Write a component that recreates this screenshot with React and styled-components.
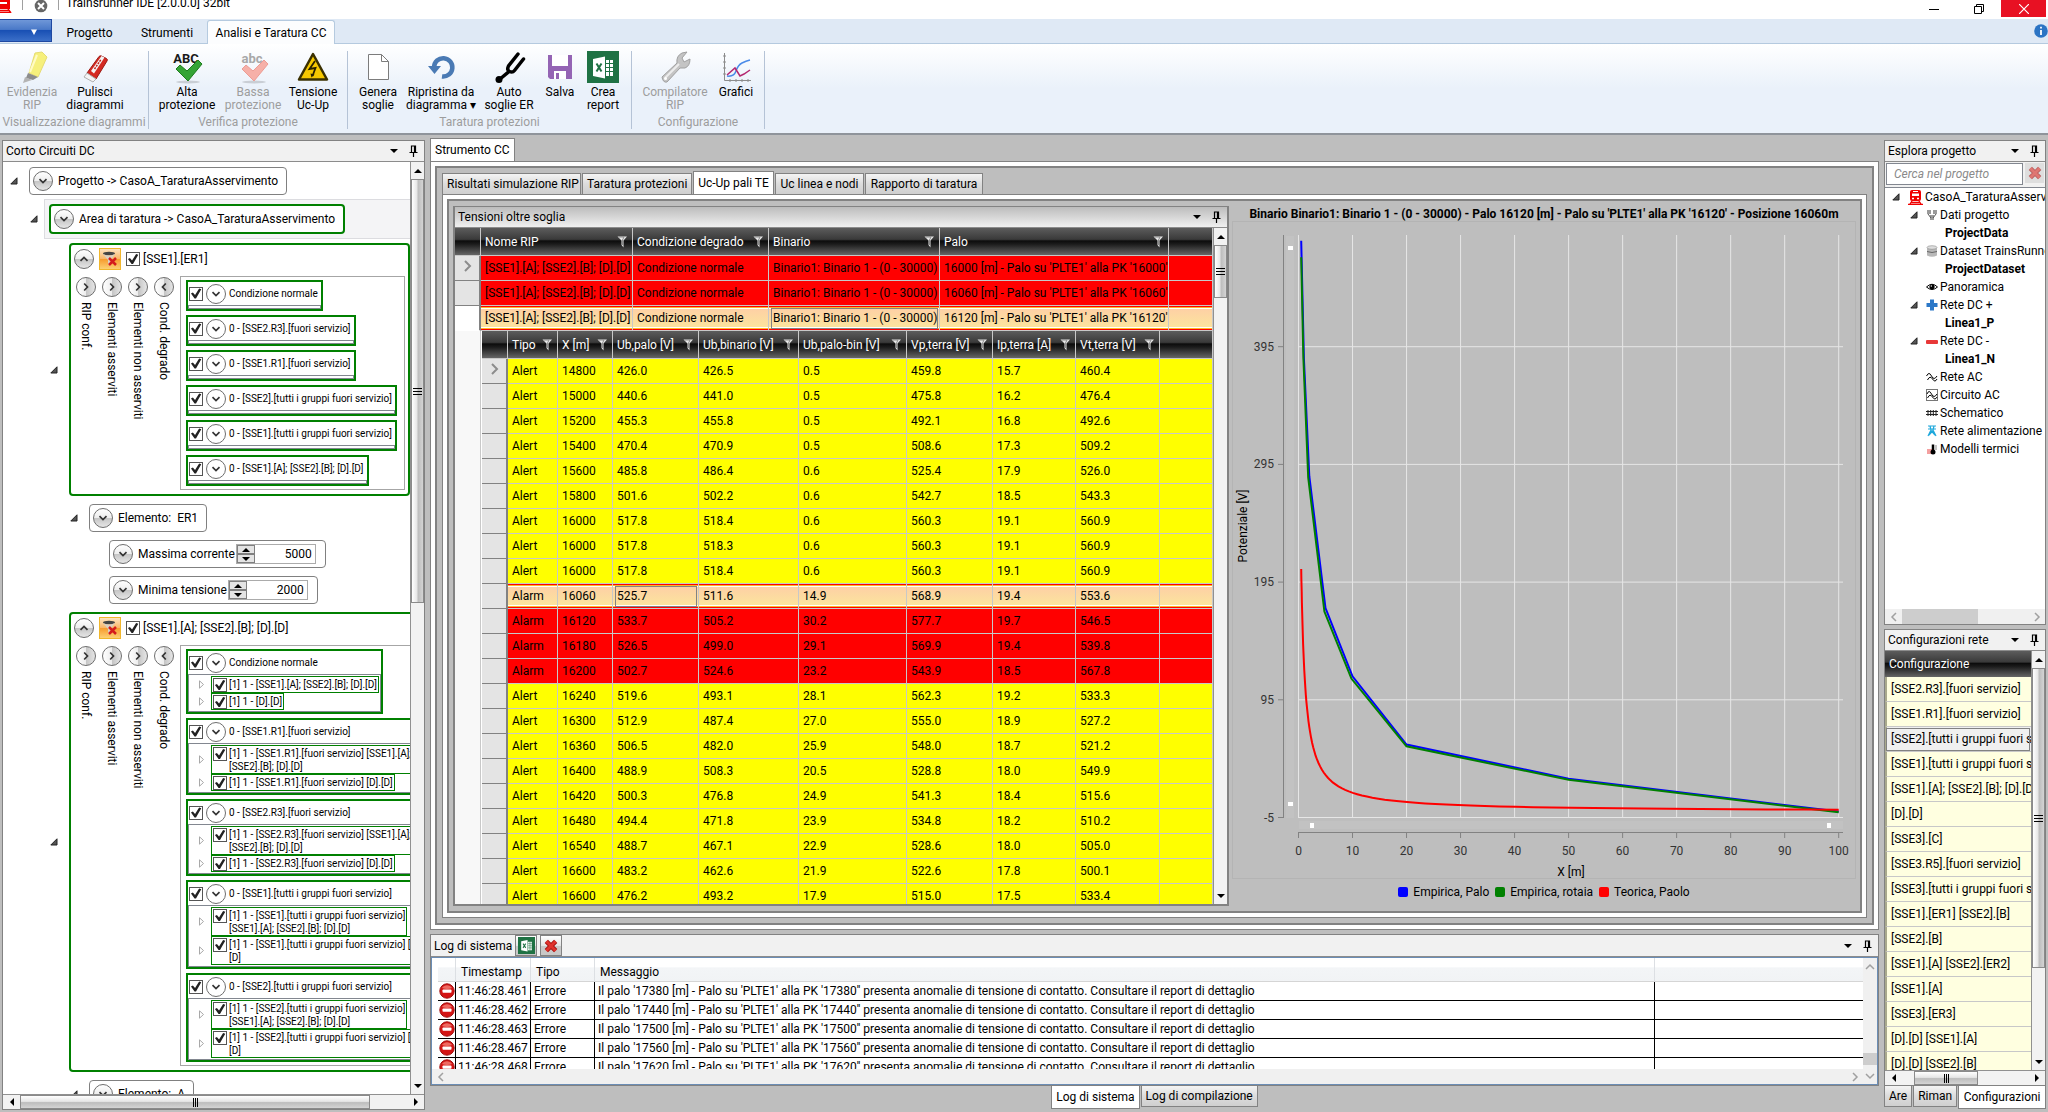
import React from 'react';
import styled, { createGlobalStyle, css } from 'styled-components';

const GlobalStyle = createGlobalStyle`
    * {
        box-sizing: border-box;
    }
    body {
        margin: 0;
        font-family: Roboto, "Open Sans", sans-serif;
        font-size: 12px;
        line-height: 16px;
        color: #000;
        background: #bebebe;
    }
    button, input {
        font: inherit;
        color: inherit;
        margin: 0;
    }
    button {
        border: none;
        background: none;
        padding: 0;
    }
    h1, h2, p {
        margin: 0;
        font-size: 12px;
        font-weight: 400;
    }
`

const App = styled.div`
    height: 100vh;
    display: flex;
    flex-direction: column;
    overflow: hidden;
    white-space: nowrap;
`

/* title bar */
const TitleBar = styled.header`
    height: 19px;
    flex: none;
    display: flex;
    align-items: flex-start;
    background: #fff;
    overflow: hidden;
    svg {
        flex: none;
    }
`
const TitleIcons = styled.div`
    display: flex;
    width: 66px;
    height: 13px;
    justify-content: space-between;
    padding-right: 7px;
`
const TitleRule = styled.span`
    width: 1px;
    height: 10px;
    background: #a0a0a0;
`
const Title = styled.h1`
    flex: 1;
    line-height: 7px;
`
const WindowButton = styled.button`
    width: 45px;
    height: 17px;
    display: flex;
    align-items: center;
    justify-content: center;
    background: ${props => props.$close ? "#e81123" : "transparent"};
    margin-right: ${props => props.$close ? "2px" : "0"};
`

/* ribbon */
const RibbonTabs = styled.nav`
    height: 25px;
    flex: none;
    display: flex;
    align-items: flex-end;
    background: #dfe9f5;
    border-bottom: 1px solid #b5cadf;
`
const FileButton = styled.button`
    width: 52px;
    height: 23px;
    align-self: flex-start;
    padding-left: 16px;
    color: #fff;
    border: 1px solid #1f48a1;
    border-left: none;
    background: linear-gradient(#6f97d8, #4a79c8 45%, #1950b4 50%, #3b6fc8);
`
const RibbonTab = styled.button`
    height: 24px;
    width: ${props => props.$width};
    margin-bottom: -1px;
    border: 1px solid ${props => props.$active ? "#b5cadf" : "transparent"};
    border-bottom: none;
    border-radius: 3px 3px 0 0;
    background: ${props => props.$active ? "#fcfdfe" : "transparent"};
`
const Spacer = styled.span`
    flex: 1;
`
const Info = styled.span`
    width: 14px;
    height: 24px;
    display: flex;
    align-items: center;
`
const Ribbon = styled.div`
    height: 91px;
    flex: none;
    display: flex;
    padding: 7px 0 4px;
    background: linear-gradient(#fff, #eaf1fa 50%, #eaf1fa);
    border-bottom: 2px solid #8f949b;
`
const RibbonGroup = styled.section`
    width: ${props => props.$width};
    padding-left: ${props => props.$pad};
    border-right: 1px solid #b5c3d6;
    display: flex;
    flex-direction: column;
`
const RibbonRow = styled.div`
    display: flex;
    flex: 1;
`
const RibbonButton = styled.button`
    width: ${props => props.$width};
    display: flex;
    flex-direction: column;
    align-items: center;
    line-height: 13px;
    color: ${props => props.disabled ? "#9d9d9d" : "#000"};
    svg {
        width: 32px;
        height: 32px;
        margin-bottom: 3px;
        overflow: visible;
    }
`
const RibbonCaption = styled.p`
    line-height: 13px;
    text-align: center;
    color: #9d9d9d;
    margin-left: -${props => props.$pad};
`

/* docking area */
const Workspace = styled.div`
    flex: 1;
    min-height: 0;
    display: flex;
    gap: 5px;
    padding: 5px 2px 2px;
`
const LeftDock = styled.aside`
    width: 423px;
    flex: none;
    display: flex;
`
const CenterDock = styled.main`
    flex: 1;
    min-width: 0;
    display: flex;
    flex-direction: column;
`
const RightDock = styled.aside`
    width: 162px;
    flex: none;
    display: flex;
    flex-direction: column;
    gap: 4px;
`
const LowerDock = styled.div`
    flex: 483 0 0;
    min-height: 0;
    display: flex;
    flex-direction: column;
`
const Panel = styled.section`
    flex: ${props => props.$flex || 1};
    min-width: 0;
    min-height: 0;
    display: flex;
    flex-direction: column;
    background: #fff;
    border: 1px solid #828282;
    overflow: hidden;
`
const PanelHeader = styled.header`
    height: ${props => props.$tall ? "22px" : "21px"};
    flex: none;
    display: flex;
    align-items: center;
    padding: 0 6px 0 3px;
    background: #f1f1f1;
    border-bottom: 1px solid #8c8c8c;
    gap: 3px;
`
const PanelTools = styled.div`
    margin-left: auto;
    display: flex;
    align-items: center;
    gap: 10px;
    button {
        display: flex;
    }
`
const PanelBody = styled.div`
    flex: 1;
    min-height: 0;
    display: flex;
`
const Tabs = styled.div`
    display: flex;
    flex: none;
    align-items: ${props => props.$below ? "flex-start" : "flex-end"};
    justify-content: ${props => props.$center ? "center" : "flex-start"};
    height: ${props => props.$height || "23px"};
    gap: 1px;
`
const Tab = styled.button`
    height: ${props => props.$active ? "23px" : "21px"};
    padding: 0 4px;
    width: ${props => props.$width || "auto"};
    flex: ${props => props.$grow ? 1 : "none"};
    overflow: hidden;
    border: 1px solid #828282;
    ${props => props.$below ? "border-top: none;" : "border-bottom: none;"}
    background: ${props => props.$active ? "#fff" : "linear-gradient(#f4f4f4, #dcdcdc 50%, #cfcfcf)"};
`
const Frame = styled.div`
    flex: 1;
    min-height: 0;
    display: flex;
    border: 1px solid #828282;
    padding: 4px;
    background: #fff;
`
const FrameInner = styled.div`
    flex: 1;
    min-width: 0;
    display: flex;
    flex-direction: ${props => props.$column ? "column" : "row"};
    border: 2px solid #828282;
    padding: ${props => props.$column ? "3px 5px 5px" : "5px 5px 5px 4px"};
    background: #bebebe;
`

/* scroll bars */
const ScrollTrack = styled.div`
    flex: none;
    display: flex;
    ${props => props.$horizontal
        ? css`height: 15px; flex-direction: row;`
        : css`width: 14px; flex-direction: column;`}
    background: ${props => props.$flat ? "#f0f0f0" : "#f2f2f2"};
    ${props => !props.$flat && css`border: 0 solid #909090; ${props.$horizontal ? "border-top-width: 1px;" : "border-left-width: 1px;"}`}
`
const ScrollButton = styled.button`
    flex: none;
    width: ${props => props.$horizontal ? "17px" : "100%"};
    height: ${props => props.$horizontal ? "100%" : "17px"};
    display: flex;
    align-items: center;
    justify-content: center;
`
const ScrollRun = styled.div`
    flex: ${props => props.$grow} 0 0;
`
const ScrollThumb = styled.div`
    flex: ${props => props.$grow} 0 0;
    display: flex;
    align-items: center;
    justify-content: center;
    ${props => props.$flat ? css`background: #cdcdcd;` : css`
        border: 1px solid #8a8a8a;
        background: linear-gradient(${props.$horizontal ? "180deg" : "90deg"}, #fff, #e6e6e6 45%, #bdbdbd 55%, #d4d4d4);
    `}
`

/* short circuit tree */
const TreeArea = styled.div`
    flex: 1;
    min-height: 0;
    min-width: 0;
    overflow: hidden;
    display: flex;
    flex-direction: column;
    gap: 8px;
    padding-top: 5px;
`
const TreeRow = styled.div`
    flex: none;
    display: flex;
    align-items: center;
    gap: 11px;
    padding-left: ${props => 7 + props.$level * 20}px;
`
const ArrowSlot = styled.span`
    width: 8px;
    flex: none;
    display: flex;
`
const Highlight = styled.div`
    flex: 1;
    margin: -4px 0 -4px -5px;
    padding: 4px;
    border: 1px solid #dcdce0;
    border-right: none;
    background: #f4f4f6;
`
const NodeBox = styled.div`
    display: flex;
    width: fit-content;
    align-items: center;
    gap: 5px;
    padding: 3px 8px 3px 3px;
    background: #fff;
    border: ${props => props.$green ? "2px solid #008000" : "1px solid #808080"};
    border-radius: 4px;
`
const RoundButton = styled.button`
    width: 20px;
    height: 20px;
    flex: none;
    display: flex;
    align-items: center;
    justify-content: center;
    border: 1px solid #6e6e6e;
    border-radius: 50%;
    background: ${props => props.$plain ? "#fff" : `linear-gradient(${props.$side ? "90deg" : "180deg"}, #fff, #ededed 50%, #c4c4c4 50%, #e6e6e6)`};
`
const Check = styled.input`
    appearance: none;
    width: 14px;
    height: 14px;
    flex: none;
    border: 1px solid #555;
    background: #fff;
    &:checked::before {
        content: "";
        display: block;
        width: 12px;
        height: 12px;
        background: #222;
        clip-path: polygon(8% 50%, 24% 42%, 42% 62%, 76% 8%, 94% 14%, 50% 92%, 38% 92%);
    }
`
const Spinner = styled.span`
    display: flex;
    width: 80px;
    height: 20px;
    margin-right: 1px;
    border: 1px solid #ababab;
`
const SpinnerButtons = styled.span`
    display: grid;
    width: 18px;
    grid-template-rows: 9px 9px;
    button {
        display: flex;
        align-items: center;
        justify-content: center;
        border: 1px solid #808080;
        background: #e4e4e4;
    }
`
const SpinnerInput = styled.input`
    flex: 1;
    min-width: 0;
    border: none;
    padding: 0 3px;
    text-align: right;
`
const SpinLabel = styled.label`
    display: flex;
    align-items: center;
    gap: 1px;
`
const GroupBox = styled.div`
    flex: none;
    width: ${props => props.$wide ? "380px" : "341px"};
    border: 2px solid #008000;
    border-radius: 4px;
    padding: 3px 3px 4px;
`
const GroupHead = styled.div`
    display: flex;
    align-items: center;
    gap: 5px;
    height: 22px;
    margin-bottom: 6px;
`
const FilterButton = styled.button`
    width: 22px;
    height: 22px;
    border: 1px solid #f0b62c;
    background: linear-gradient(#fde3c0, #f9b566 50%, #f79a2c 50%, #fcd074);
    display: flex;
    align-items: center;
    justify-content: center;
`
const CheckLabel = styled.label`
    display: flex;
    align-items: center;
    gap: 3px;
`
const GroupColumns = styled.div`
    display: flex;
    gap: 6px;
    padding-left: 2px;
`
const Expander = styled.div`
    width: 20px;
    display: flex;
    flex-direction: column;
    align-items: center;
    gap: 5px;
    padding-top: 1px;
    span {
        writing-mode: vertical-rl;
        line-height: 20px;
    }
`
const Conditions = styled.div`
    flex: 1;
    display: flex;
    flex-direction: column;
    align-items: flex-start;
    gap: 4px;
    padding: 3px 5px;
    border: 1px solid #a6a6a6;
    font-size: 10px;
    line-height: 13px;
`
const Condition = styled.div`
    border: 2px solid #008000;
    min-width: ${props => props.$wide ? "240px" : "0"};
`
const ConditionHead = styled.div`
    display: flex;
    align-items: center;
    gap: 3px;
    height: 23px;
    padding: 0 3px 0 1px;
`
const ConditionList = styled.div`
    border: 1px solid #828790;
    padding: 1px 1px 1px 10px;
    min-height: 4px;
`
const SubRow = styled.div`
    display: flex;
    align-items: center;
    gap: 6px;
`
const SubItem = styled.label`
    display: flex;
    align-items: flex-start;
    gap: 2px;
    padding: 1px 1px 0;
    border: 1px solid #008000;
    white-space: pre;
`

/* data grids */
const GridPanel = styled.section`
    width: 776px;
    flex: none;
    display: flex;
    flex-direction: column;
    background: #fff;
    border: 2px solid #828282;
    border-top-width: 1px;
    overflow: hidden;
`
const GridPanelHeader = styled(PanelHeader)`
    background: linear-gradient(#bcbcbc, #f0f0f0);
`
const GridArea = styled.div`
    flex: 1;
    min-width: 0;
    overflow: hidden;
`
const Grid = styled.table`
    table-layout: fixed;
    width: 100%;
    border-spacing: 0;
    th, td {
        padding: 0 0 0 4px;
        overflow: hidden;
        border-right: 1px solid #c8c8c8;
        border-bottom: 1px solid #c8c8c8;
    }
`
const HeadCell = styled.th`
    height: 28px;
    font-weight: 400;
    text-align: left;
    color: #fff;
    background: linear-gradient(#5c5c5c, #3a3a3a 42%, #0c0c0c 48%, #1c1c1c 60%, #666);
`
const HeadContent = styled.span`
    display: flex;
    align-items: center;
    justify-content: space-between;
    padding-right: 4px;
`
const tones = { alert: "#ffff00", alarm: "#ff0000" };
const GridRow = styled.tr`
    height: 25px;
    td {
        background: ${props => props.$selected ? "linear-gradient(#fecda6, #fbe79c)" : tones[props.$tone]};
        ${props => props.$selected && css`
            box-shadow: inset 0 1px #f00, inset 0 2px #ffb628, inset 0 3px #fff,
                inset 0 -1px #f00, inset 0 -2px #ffb628, inset 0 -3px #fff;
        `}
    }
    th {
        padding: 0;
        background: ${props => props.$bare ? "#fff" : "#e4e4e4"};
        border-right: 2px solid #828282;
        border-bottom: 1px solid ${props => props.$bare ? "#fff" : "#828282"};
    }
`
const FocusCell = styled.td`
    outline: 1px solid #828282;
    outline-offset: -3px;
`
const NestedCell = styled.td`
    && {
        padding: 0 0 0 1px;
        border: none;
    }
`
const Gutter = styled.td`
    background: #f8f8f8;
`

/* chart */
const ChartPanel = styled.section`
    flex: 1;
    min-width: 0;
    display: flex;
    flex-direction: column;
    padding-left: 4px;
`
const ChartTitle = styled.h2`
    font-weight: 700;
    text-align: center;
`
const ChartPlot = styled.svg`
    flex: 1;
    min-height: 0;
    width: 100%;
    outline: 1px solid #b4b4b4;
`
const Legend = styled.div`
    height: 28px;
    display: flex;
    justify-content: center;
    align-items: center;
    gap: 6px;
`
const LegendItem = styled.span`
    display: flex;
    align-items: center;
    gap: 5px;
    &::before {
        content: "";
        width: 10px;
        height: 10px;
        border-radius: 2px;
        background: ${props => props.$color};
    }
`

/* log */
const LogPanel = styled(Panel)`
    height: 152px;
    flex: none;
    margin-top: 4px;
`
const LogButton = styled.button`
    width: 22px;
    height: 21px;
    border: 1px solid #828282;
    background: linear-gradient(#fff, #e4e4e4 50%, #c8c8c8 50%);
    display: flex;
    align-items: center;
    justify-content: center;
`
const LogBody = styled.div`
    flex: 1;
    min-height: 0;
    display: flex;
    border: 1px solid #6b8db5;
`
const LogMain = styled.div`
    flex: 1;
    min-width: 0;
    display: flex;
    flex-direction: column;
`
const LogRows = styled.div`
    flex: 1;
    min-height: 0;
    overflow: hidden;
    padding-left: 6px;
`
const LogTable = styled.table`
    table-layout: fixed;
    width: 100%;
    border-spacing: 0;
    th {
        height: 24px;
        padding: 4px 0 0 5px;
        text-align: left;
        font-weight: 400;
        border-right: 1px solid #dcdfe3;
        border-bottom: 1px solid #d5d5d5;
        background: linear-gradient(#fff 40%, #f3f5f7 42%, #f1f3f5);
    }
    td {
        height: 19px;
        padding: 0 0 0 3px;
        line-height: 18px;
        border-right: 1px solid #000;
        border-bottom: 1px solid #000;
    }
    td:first-child {
        padding: 0 0 0 1px;
    }
    td:nth-child(2) {
        padding-left: 2px;
    }
    th:last-child, td:last-child {
        border-right: none;
    }
    svg {
        display: block;
    }
`

/* project explorer */
const SearchRow = styled.form`
    display: flex;
    gap: 2px;
    padding: 1px 1px 2px;
    background: #f1f1f1;
    border-bottom: 1px solid #828790;
`
const SearchInput = styled.input`
    width: 137px;
    height: 22px;
    border: 1px solid #828790;
    padding: 0 7px;
    font-style: italic;
    &::placeholder {
        color: #8a8a8a;
    }
`
const ClearButton = styled.button`
    width: 20px;
    height: 20px;
    display: flex;
    align-items: center;
    justify-content: center;
    background: #dedede;
`
const ProjectTree = styled.div`
    flex: 1;
    min-height: 0;
    overflow: hidden;
`
const ProjectRow = styled.div`
    height: 18px;
    display: flex;
    align-items: center;
    gap: 2px;
    padding-left: ${props => props.$pad};
    font-weight: ${props => props.$bold ? 700 : 400};
    svg {
        flex: none;
    }
`
const ProjectArrow = styled.span`
    width: 14px;
    flex: none;
    display: flex;
`
const ConfigTable = styled.table`
    width: 100%;
    table-layout: fixed;
    border-spacing: 0;
    td {
        height: 25px;
        padding: 0 0 0 4px;
        overflow: hidden;
        background: #ffffe0;
        border-left: 2px solid #a9a98c;
        border-bottom: 1px solid #c8c8c8;
    }
    tr:nth-child(3) td {
        background: #f0f0f0;
        outline: 1px solid #828282;
        outline-offset: -2px;
    }
    th {
        height: 26px;
        padding-left: 4px;
    }
`

/* icons */
const Caret = ({ dir = "down", flat }) => {
    const turn = { down: 0, left: 90, up: 180, right: 270 }[dir];
    return (
        <svg width="10" height="10" viewBox="0 0 10 10">
            <g transform={`rotate(${turn} 5 5)`}>
                {flat
                    ? <path d="M1 3 5 7 9 3" fill="none" stroke="#a0a0a0" strokeWidth="1.500" />
                    : <path d="M1 3h8L5 7z" fill="#000" />}
            </g>
        </svg>
    );
};

const Pin = () => (
    <svg width="9" height="12" viewBox="0 0 9 12">
        <path d="M2.500 7V1h4v6M0.500 7.500h8M4.500 7.500V12M5.500 1v6" fill="none" stroke="#000" strokeWidth="1.200" />
    </svg>
);

const Chevron = ({ dir }) => {
    const turn = { down: 0, left: 90, up: 180, right: 270 }[dir];
    return (
        <svg width="10" height="10" viewBox="0 0 10 10">
            <path d="M1.500 3.200 5 6.500l3.500-3.300" transform={`rotate(${turn} 5 5)`} fill="none" stroke="#333" strokeWidth="1.700" />
        </svg>
    );
};

const OpenArrow = () => (
    <svg width="8" height="8" viewBox="0 0 8 8">
        <path d="M7 0.800V7H0.800z" fill="#555" stroke="#222" />
    </svg>
);

const ClosedArrow = () => (
    <svg width="6" height="9" viewBox="0 0 6 9">
        <path d="M0.500 0.800v7.400L4.500 4.500z" fill="#fff" stroke="#a8a8a8" />
    </svg>
);

const Funnel = () => (
    <svg width="11" height="12" viewBox="0 0 11 12">
        <path d="M0.500 0.500h9.500L6.500 4.500v7L4.500 9V4.500z" fill="#e8e8e8" />
        <path d="M2 1h5L5.500 4v5" fill="none" stroke="#8c8c8c" />
    </svg>
);

const RedCross = ({ size = 14, opacity = 1 }) => (
    <svg width={size} height={size} viewBox="0 0 12 12" opacity={opacity}>
        <path d="M2 2l8 8M10 2l-8 8" stroke="#a30f0f" strokeWidth="4" />
        <path d="M2 2l8 8M10 2l-8 8" stroke="#e0322c" strokeWidth="2.500" />
    </svg>
);

const ExcelIcon = ({ size = 32 }) => (
    <svg width={size} height={size} viewBox="0 0 32 32">
        <rect width="32" height="32" fill="#1f7244" />
        <path d="M6 8l12-2.500v22L6 25z" fill="#fff" />
        <path d="M19 9h7v16h-7z" fill="#fff" />
        <path d="M19 12.500h7M19 16.500h7M19 20.500h7M22.500 9v16" stroke="#1f7244" />
        <path d="M9.500 12.500l5 8M14.500 12.500l-5 8" stroke="#1f7244" strokeWidth="2" />
    </svg>
);

const TrainIcon = () => (
    <svg width="15" height="15" viewBox="0 0 15 15">
        <rect x="2" y="0" width="11" height="11" rx="2" fill="#f00000" />
        <path d="M4 3.500h7v2.500H4z" fill="#fff" />
        <path d="M5 1.500h5" stroke="#fff" />
        <path d="M4 8.500h2M9 8.500h2" stroke="#fff" strokeWidth="1.500" />
        <path d="M4 11l-2 3M11 11l2 3M0 14.300h15M3 12.500h9" stroke="#f00000" strokeWidth="1.300" />
    </svg>
);

const NoEntry = () => (
    <svg width="16" height="16" viewBox="0 0 16 16">
        <circle cx="8" cy="8" r="7.200" fill="#d41414" stroke="#a31010" />
        <path d="M3 5a6 6 0 0 1 10 0q-5 2-10 0z" fill="#ee6a62" />
        <rect x="3.500" y="6.500" width="9" height="3.200" rx="0.800" fill="#fff" />
    </svg>
);

const HighlighterIcon = () => (
    <svg viewBox="0 0 32 32">
        <path d="M19 2l7-1 5 5-9 20-9-4z" fill="#f6f07c" stroke="#e6dc74" />
        <path d="M21 4l-7 17" stroke="#fffbc4" strokeWidth="2" />
        <path d="M12 22l10 4-5 3-7-2z" fill="#8c8c8c" />
        <path d="M9 26l7 3-9 3z" fill="#b4b4b4" />
    </svg>
);

const EraserIcon = () => (
    <svg viewBox="0 0 32 32">
        <path d="M8 22L20 5.500q1-1 2.500-.5l5 2.500q1.500 1 .5 2.500L17 28z" fill="#d42a22" stroke="#9c1a14" />
        <path d="M12 20L22.500 5l3 1.500-10.500 16z" fill="#f4f4f4" />
        <path d="M15.500 18L22 8.500" stroke="#c02018" strokeWidth="1.500" strokeDasharray="2 1" />
        <path d="M8 22l9 6-3 3-9-5z" fill="#f4f4f4" stroke="#b0b0b0" />
    </svg>
);

const SpellIcon = ({ text, color, mark, edge }) => (
    <svg viewBox="0 0 32 32">
        <text x="15" y="12" textAnchor="middle" fontSize="13" fontWeight="700" fill={color}>{text}</text>
        <ellipse cx="17" cy="31" rx="12" ry="1.500" fill="#000" opacity="0.150" />
        <path d="M5 18l4-4 7 6L27 9l4 4-14 17z" fill={mark} stroke={edge} />
    </svg>
);

const VoltageIcon = () => (
    <svg viewBox="0 0 32 32">
        <path d="M16 3L30 28.500H2z" fill="#f6c800" stroke="#3a3000" strokeWidth="2.500" strokeLinejoin="round" />
        <path d="M18 10l-5.500 8 6-1-3 8" fill="none" stroke="#2a2200" strokeWidth="1.800" />
        <path d="M13.500 22.500l1 4 3-3z" fill="#2a2200" />
    </svg>
);

const PageIcon = () => (
    <svg viewBox="0 0 32 32">
        <path d="M6.500 3.500h13l7 7v18h-20z" fill="#fff" stroke="#7c7c7c" />
        <path d="M19.500 3.500v7h7" fill="none" stroke="#7c7c7c" />
    </svg>
);

const UndoIcon = () => (
    <svg viewBox="0 0 32 32">
        <path d="M9 16a9.200 9.200 0 1 1 8 9.500" fill="none" stroke="#4a7ab4" strokeWidth="4.500" />
        <path d="M3 15h13l-6.500 8z" fill="#4a7ab4" />
    </svg>
);

const ForkIcon = () => (
    <svg viewBox="0 0 32 32">
        <path d="M25 3L15.500 15q-2 4 1 5.500t5-1L30.500 8" fill="none" stroke="#000" strokeWidth="3.500" strokeLinecap="round" />
        <path d="M16 20.500L7 28" stroke="#000" strokeWidth="3.500" />
        <circle cx="6" cy="28.500" r="3.500" />
    </svg>
);

const SaveIcon = () => (
    <svg viewBox="0 0 32 32">
        <path d="M4 4h24v24H6l-2-2z" fill="#9464b4" />
        <path d="M8 4h16v11H8z" fill="#fff" />
        <path d="M10 20h12v8H10z" fill="#fff" />
        <path d="M12 22h3v6h-3z" fill="#9464b4" />
    </svg>
);

const WrenchIcon = () => (
    <svg viewBox="0 0 32 32">
        <path d="M3 26L18 12q-1-7 5-10l5-1-5 6 2 4 6-3q0 7-5 9l-5 0L8 31q-4 1-5-5z" fill="#c4c4c4" stroke="#a0a0a0" />
        <path d="M6 27L20 13" stroke="#ececec" strokeWidth="2" />
        <circle cx="6.500" cy="27.500" r="1.500" fill="#fff" />
    </svg>
);

const GraphIcon = () => (
    <svg viewBox="0 0 32 32">
        <path d="M4.500 2v27.500H31M3 5h3M3 11h3M3 17h3M3 23h3M10 28v3M16 28v3M22 28v3M28 28v3" fill="none" stroke="#8c8c8c" />
        <path d="M7 25q7 1 9-5t6-8 8-3" fill="none" stroke="#4a8ae8" strokeWidth="1.500" />
        <path d="M7 24l8-7 5 8 4-2 6-4" fill="none" stroke="#b42870" strokeWidth="1.500" />
    </svg>
);

const smallIcons = {
    train: <TrainIcon />,
    data: <svg width="12" height="12" viewBox="0 0 12 12"><path d="M1 1h4v4H1zM7 1h4v4H7zM4 6h4v5H4z" fill="#9a9a9a" /><path d="M2 5l3 4M10 5L7 9" stroke="#555" /></svg>,
    dataset: <svg width="12" height="12" viewBox="0 0 12 12"><path d="M1 2.500v8q5 2.500 10 0v-8z" fill="#b8b8b8" /><ellipse cx="6" cy="2.500" rx="5" ry="1.800" fill="#dedede" stroke="#888" strokeWidth="0.600" /><path d="M1 6.500q5 2 10 0" fill="none" stroke="#666" /></svg>,
    eye: <svg width="12" height="12" viewBox="0 0 12 12"><path d="M0.500 6Q6 0.500 11.500 6 6 11 0.500 6z" fill="#fff" stroke="#000" /><circle cx="6" cy="5.800" r="2.600" /><circle cx="5.300" cy="5" r="0.700" fill="#fff" /></svg>,
    plus: <svg width="12" height="12" viewBox="0 0 12 12"><path d="M4 0.500h4V4h3.500v4H8v3.500H4V8H0.500V4H4z" fill="#2c78c8" /></svg>,
    minus: <svg width="12" height="12" viewBox="0 0 12 12"><rect y="5" width="12" height="4" rx="1" fill="#e83838" /></svg>,
    wave: <svg width="12" height="12" viewBox="0 0 12 12"><path d="M0.500 5Q3 0 5.500 5T11 5M1.500 9Q4 4 6.500 8T11 8" fill="none" stroke="#000" /></svg>,
    circuit: <svg width="12" height="12" viewBox="0 0 12 12"><rect x="0.500" y="0.500" width="11" height="11" fill="none" stroke="#777" /><path d="M1 5Q3 0 5.500 5T11 5M1.500 9Q4 4 6.500 8T11 8" fill="none" stroke="#000" /></svg>,
    rails: <svg width="12" height="12" viewBox="0 0 12 12"><path d="M0 4.500h12M0 7.500h12M2 3v6M4.700 3v6M7.300 3v6M10 3v6" stroke="#222" /></svg>,
    pylon: <svg width="12" height="12" viewBox="0 0 12 12"><path d="M2 1h8M2 4h8M4 1l1 4-3 6M8 1L7 5l3 6M4.500 5L9 10M7.500 5L3 10" fill="none" stroke="#1ea8dc" strokeWidth="1.200" /></svg>,
    thermo: <svg width="12" height="12" viewBox="0 0 12 12"><rect x="1" y="6" width="5" height="5" fill="#f4a0a0" /><path d="M7 1.500v6" stroke="#000" strokeWidth="2.500" /><circle cx="7" cy="9" r="2.500" /><path d="M10 2v5" stroke="#888" /></svg>,
};

/* data */
const ribbon = [
    { caption: "Visualizzazione diagrammi", width: "149px", pad: "2px", items: [
        { label: ["Evidenzia", "RIP"], width: "60px", icon: <HighlighterIcon />, disabled: true },
        { label: ["Pulisci", "diagrammi"], width: "66px", icon: <EraserIcon /> },
    ] },
    { caption: "Verifica protezione", width: "199px", pad: "5px", items: [
        { label: ["Alta", "protezione"], width: "66px", icon: <SpellIcon text="ABC" color="#1a1a1a" mark="#35a435" edge="#1c7c1c" /> },
        { label: ["Bassa", "protezione"], width: "66px", icon: <SpellIcon text="abc" color="#a8a8a8" mark="#f6b0a8" edge="#ec9c94" />, disabled: true },
        { label: ["Tensione", "Uc-Up"], width: "54px", icon: <VoltageIcon /> },
    ] },
    { caption: "Taratura protezioni", width: "284px", pad: "4px", items: [
        { label: ["Genera", "soglie"], width: "52px", icon: <PageIcon /> },
        { label: ["Ripristina da", "diagramma ▾"], width: "74px", icon: <UndoIcon /> },
        { label: ["Auto", "soglie ER"], width: "62px", icon: <ForkIcon /> },
        { label: ["Salva"], width: "40px", icon: <SaveIcon /> },
        { label: ["Crea", "report"], width: "46px", icon: <ExcelIcon /> },
    ] },
    { caption: "Configurazione", width: "133px", pad: "9px", items: [
        { label: ["Compilatore", "RIP"], width: "68px", icon: <WrenchIcon />, disabled: true },
        { label: ["Grafici"], width: "54px", icon: <GraphIcon /> },
    ] },
];

const firstConditions = [
    { label: "Condizione normale" },
    { label: "0 - [SSE2.R3].[fuori servizio]" },
    { label: "0 - [SSE1.R1].[fuori servizio]" },
    { label: "0 - [SSE2].[tutti i gruppi fuori servizio]" },
    { label: "0 - [SSE1].[tutti i gruppi fuori servizio]" },
    { label: "0 - [SSE1].[A]; [SSE2].[B]; [D].[D]" },
];

const secondConditions = [
    { label: "Condizione normale", items: ["[1] 1 - [SSE1].[A]; [SSE2].[B]; [D].[D]", "[1] 1 - [D].[D]"] },
    { label: "0 - [SSE1.R1].[fuori servizio]", wide: true, items: ["[1] 1 - [SSE1.R1].[fuori servizio] [SSE1].[A];\n[SSE2].[B]; [D].[D]", "[1] 1 - [SSE1.R1].[fuori servizio] [D].[D]"] },
    { label: "0 - [SSE2.R3].[fuori servizio]", wide: true, items: ["[1] 1 - [SSE2.R3].[fuori servizio] [SSE1].[A];\n[SSE2].[B]; [D].[D]", "[1] 1 - [SSE2.R3].[fuori servizio] [D].[D]"] },
    { label: "0 - [SSE1].[tutti i gruppi fuori servizio]", wide: true, items: ["[1] 1 - [SSE1].[tutti i gruppi fuori servizio]\n[SSE1].[A]; [SSE2].[B]; [D].[D]", "[1] 1 - [SSE1].[tutti i gruppi fuori servizio] [D].\n[D]"] },
    { label: "0 - [SSE2].[tutti i gruppi fuori servizio]", wide: true, items: ["[1] 1 - [SSE2].[tutti i gruppi fuori servizio]\n[SSE1].[A]; [SSE2].[B]; [D].[D]", "[1] 1 - [SSE2].[tutti i gruppi fuori servizio] [D].\n[D]"] },
];

const poles = ["16000", "16060", "16120"];

const readings = [
    ["Alert", "14800", "426.0", "426.5", "0.5", "459.8", "15.7", "460.4"],
    ["Alert", "15000", "440.6", "441.0", "0.5", "475.8", "16.2", "476.4"],
    ["Alert", "15200", "455.3", "455.8", "0.5", "492.1", "16.8", "492.6"],
    ["Alert", "15400", "470.4", "470.9", "0.5", "508.6", "17.3", "509.2"],
    ["Alert", "15600", "485.8", "486.4", "0.6", "525.4", "17.9", "526.0"],
    ["Alert", "15800", "501.6", "502.2", "0.6", "542.7", "18.5", "543.3"],
    ["Alert", "16000", "517.8", "518.4", "0.6", "560.3", "19.1", "560.9"],
    ["Alert", "16000", "517.8", "518.3", "0.6", "560.3", "19.1", "560.9"],
    ["Alert", "16000", "517.8", "518.4", "0.6", "560.3", "19.1", "560.9"],
    ["Alarm", "16060", "525.7", "511.6", "14.9", "568.9", "19.4", "553.6"],
    ["Alarm", "16120", "533.7", "505.2", "30.2", "577.7", "19.7", "546.5"],
    ["Alarm", "16180", "526.5", "499.0", "29.1", "569.9", "19.4", "539.8"],
    ["Alarm", "16200", "502.7", "524.6", "23.2", "543.9", "18.5", "567.8"],
    ["Alert", "16240", "519.6", "493.1", "28.1", "562.3", "19.2", "533.3"],
    ["Alert", "16300", "512.9", "487.4", "27.0", "555.0", "18.9", "527.2"],
    ["Alert", "16360", "506.5", "482.0", "25.9", "548.0", "18.7", "521.2"],
    ["Alert", "16400", "488.9", "508.3", "20.5", "528.8", "18.0", "549.9"],
    ["Alert", "16420", "500.3", "476.8", "24.9", "541.3", "18.4", "515.6"],
    ["Alert", "16480", "494.4", "471.8", "23.9", "534.8", "18.2", "510.2"],
    ["Alert", "16540", "488.7", "467.1", "22.9", "528.6", "18.0", "505.0"],
    ["Alert", "16600", "483.2", "462.6", "21.9", "522.6", "17.8", "500.1"],
    ["Alert", "16600", "476.2", "493.2", "17.9", "515.0", "17.5", "533.4"],
];

const logs = [
    ["11:46:28.461", "17380"],
    ["11:46:28.462", "17440"],
    ["11:46:28.463", "17500"],
    ["11:46:28.467", "17560"],
    ["11:46:28.468", "17620"],
];

const project = [
    { label: "CasoA_TaraturaAsservimento", icon: "train", open: true, pad: "7px" },
    { label: "Dati progetto", icon: "data", open: true, pad: "25px" },
    { label: "ProjectData", bold: true, pad: "60px" },
    { label: "Dataset TrainsRunner", icon: "dataset", open: true, pad: "25px" },
    { label: "ProjectDataset", bold: true, pad: "60px" },
    { label: "Panoramica", icon: "eye", pad: "25px" },
    { label: "Rete DC +", icon: "plus", open: true, pad: "25px" },
    { label: "Linea1_P", bold: true, pad: "60px" },
    { label: "Rete DC -", icon: "minus", open: true, pad: "25px" },
    { label: "Linea1_N", bold: true, pad: "60px" },
    { label: "Rete AC", icon: "wave", pad: "25px" },
    { label: "Circuito AC", icon: "circuit", pad: "25px" },
    { label: "Schematico", icon: "rails", pad: "25px" },
    { label: "Rete alimentazione", icon: "pylon", pad: "25px" },
    { label: "Modelli termici", icon: "thermo", pad: "25px" },
];

const configurations = [
    "[SSE2.R3].[fuori servizio]",
    "[SSE1.R1].[fuori servizio]",
    "[SSE2].[tutti i gruppi fuori servizio]",
    "[SSE1].[tutti i gruppi fuori servizio]",
    "[SSE1].[A]; [SSE2].[B]; [D].[D]",
    "[D].[D]",
    "[SSE3].[C]",
    "[SSE3.R5].[fuori servizio]",
    "[SSE3].[tutti i gruppi fuori servizio]",
    "[SSE1].[ER1] [SSE2].[B]",
    "[SSE2].[B]",
    "[SSE1].[A] [SSE2].[ER2]",
    "[SSE1].[A]",
    "[SSE3].[ER3]",
    "[D].[D] [SSE1].[A]",
    "[D].[D] [SSE2].[B]",
];

const ScrollBar = ({ horizontal, flat, before = 0, thumb = 1, after = 1 }) => (
    <ScrollTrack $horizontal={horizontal} $flat={flat}>
        <ScrollButton $horizontal={horizontal} aria-label="Indietro"><Caret dir={horizontal ? "left" : "up"} flat={flat} /></ScrollButton>
        <ScrollRun $grow={before} />
        {thumb > 0 && (
            <ScrollThumb $grow={thumb} $horizontal={horizontal} $flat={flat}>
                {!flat && (
                    <svg width="9" height="9" viewBox="0 0 9 9">
                        <path d={horizontal ? "M2.500 0v9M4.500 0v9M6.500 0v9" : "M0 1.500h9M0 4.500h9M0 7.500h9"} stroke="#000" />
                    </svg>
                )}
            </ScrollThumb>
        )}
        <ScrollRun $grow={after} />
        <ScrollButton $horizontal={horizontal} aria-label="Avanti"><Caret dir={horizontal ? "right" : "down"} flat={flat} /></ScrollButton>
    </ScrollTrack>
);

const Tools = () => (
    <PanelTools>
        <button aria-label="Menu"><Caret /></button>
        <button aria-label="Blocca"><Pin /></button>
    </PanelTools>
);

const Node = ({ level, open = true, green, children }) => (
    <TreeRow $level={level}>
        <ArrowSlot>{open && <OpenArrow />}</ArrowSlot>
        <NodeBox $green={green}>
            <RoundButton aria-label="Espandi"><Chevron dir="down" /></RoundButton>
            {children}
        </NodeBox>
    </TreeRow>
);

const NumberField = ({ label, value }) => (
    <SpinLabel>
        {label}
        <Spinner>
            <SpinnerButtons>
                <button aria-label="Aumenta"><Caret dir="up" /></button>
                <button aria-label="Diminuisci"><Caret /></button>
            </SpinnerButtons>
            <SpinnerInput defaultValue={value} />
        </Spinner>
    </SpinLabel>
);

const Group = ({ title, conditions, wide }) => (
    <TreeRow $level={2}>
        <ArrowSlot><OpenArrow /></ArrowSlot>
        <GroupBox $wide={wide}>
            <GroupHead>
                <RoundButton aria-label="Comprimi"><Chevron dir="up" /></RoundButton>
                <FilterButton aria-label="Rimuovi filtro">
                    <svg width="16" height="16" viewBox="0 0 16 16">
                        <ellipse cx="7" cy="2.500" rx="6" ry="1.800" fill="#444" />
                        <path d="M1 3q6 3 12 0L8.500 9v6L6 13V9z" fill="#d8d0c4" />
                        <path d="M7 7l7 7M14 7l-7 7" stroke="#d41c1c" strokeWidth="2.500" />
                    </svg>
                </FilterButton>
                <CheckLabel><Check type="checkbox" defaultChecked />{title}</CheckLabel>
            </GroupHead>
            <GroupColumns>
                {["RIP conf.", "Elementi asserviti", "Elementi non asserviti", "Cond. degrado"].map((name, i) => (
                    <Expander key={name}>
                        <RoundButton $side aria-label={name}><Chevron dir={i === 3 ? "left" : "right"} /></RoundButton>
                        <span>{name}</span>
                    </Expander>
                ))}
                <Conditions>
                    {conditions.map(condition => (
                        <Condition key={condition.label} $wide={condition.wide}>
                            <ConditionHead>
                                <Check type="checkbox" defaultChecked aria-label={condition.label} />
                                <RoundButton $plain aria-label="Espandi"><Chevron dir="down" /></RoundButton>
                                {condition.label}
                            </ConditionHead>
                            <ConditionList>
                                {condition.items && condition.items.map(item => (
                                    <SubRow key={item}>
                                        <ClosedArrow />
                                        <SubItem><Check type="checkbox" defaultChecked />{item}</SubItem>
                                    </SubRow>
                                ))}
                            </ConditionList>
                        </Condition>
                    ))}
                </Conditions>
            </GroupColumns>
        </GroupBox>
    </TreeRow>
);

const Columns = ({ widths }) => (
    <colgroup>
        {widths.map((width, i) => <col key={i} width={width} />)}
    </colgroup>
);

const Header = ({ names }) => (
    <thead>
        <tr>
            <HeadCell aria-label="Selezione" />
            {names.map(name => (
                <HeadCell key={name}><HeadContent>{name}<Funnel /></HeadContent></HeadCell>
            ))}
            <HeadCell />
        </tr>
    </thead>
);

const RowMark = () => (
    <svg width="23" height="12" viewBox="0 0 23 12">
        <path d="M9 1l5 5-5 5" fill="none" stroke="#8c8c8c" strokeWidth="2" />
    </svg>
);

const Readings = () => (
    <Grid>
        <Columns widths={[26, 50, 55, 86, 100, 108, 86, 83, 84, ""]} />
        <Header names={["Tipo", "X [m]", "Ub,palo [V]", "Ub,binario [V]", "Ub,palo-bin [V]", "Vp,terra [V]", "Ip,terra [A]", "Vt,terra [V]"]} />
        <tbody>
            {readings.map((row, i) => (
                <GridRow key={i} $tone={row[0].toLowerCase()} $selected={i === 9}>
                    <th>{i === 0 && <RowMark />}</th>
                    {row.map((value, j) => (
                        i === 9 && j === 2 ? <FocusCell key={j}>{value}</FocusCell> : <td key={j}>{value}</td>
                    ))}
                    <td />
                </GridRow>
            ))}
        </tbody>
    </Grid>
);

const Poles = () => (
    <Grid>
        <Columns widths={[26, 152, 136, 171, 229, ""]} />
        <Header names={["Nome RIP", "Condizione degrado", "Binario", "Palo"]} />
        <tbody>
            {poles.map((pole, i) => (
                <GridRow key={pole} $tone="alarm" $selected={i === 2} $bare={i === 2}>
                    <th>{i === 0 && <RowMark />}</th>
                    <td>[SSE1].[A]; [SSE2].[B]; [D].[D]</td>
                    <td>Condizione normale</td>
                    {i === 2
                        ? <FocusCell>Binario1: Binario 1 - (0 - 30000)</FocusCell>
                        : <td>Binario1: Binario 1 - (0 - 30000)</td>}
                    <td>{pole} [m] - Palo su 'PLTE1' alla PK '{pole}'</td>
                    <td />
                </GridRow>
            ))}
            <tr>
                <Gutter />
                <NestedCell colSpan={5}><Readings /></NestedCell>
            </tr>
        </tbody>
    </Grid>
);

const px = x => 65.5 + x * 5.402;
const py = v => 595.5 - (v + 5) * 1.177;
const line = points => points.map(([x, v]) => `${px(x).toFixed(1)},${py(v).toFixed(1)}`).join(" ");

const pole = [[0.5, 485], [1, 385], [2, 285], [5, 173], [10, 115], [20, 57], [50, 28], [100, 0]];
const rail = [[0.5, 471], [0.9, 385], [1.8, 284], [4.8, 170], [9.800, 113], [20, 55.5], [50, 27], [100, -0.5]];
const theory = [];
for (let x = 0.5; x <= 100; x *= 1.08) {
    theory.push([x, 165 / (x + 0.3)]);
}
theory.push([100, 1.6]);

const Chart = () => (
    <ChartPanel>
        <ChartTitle>Binario Binario1: Binario 1 - (0 - 30000) - Palo 16120 [m] - Palo su 'PLTE1' alla PK '16120' - Posizione 16060m</ChartTitle>
        <ChartPlot viewBox="0 0 622 656">
            <rect x="53" y="14" width="8" height="582" fill="#c2c2c2" />
            <rect x="66" y="599" width="544" height="8" fill="#c2c2c2" />
            {[0, 10, 20, 30, 40, 50, 60, 70, 80, 90, 100].map(x => (
                <g key={x}>
                    <path d={`M${px(x)} 13V596`} stroke="#e6e6e6" />
                    <path d={`M${px(x)} 610v6`} stroke="#828282" />
                    <text x={px(x)} y="633" textAnchor="middle" fontSize="12" fill="#333">{x}</text>
                </g>
            ))}
            {[395, 295, 195, 95, -5].map(v => (
                <g key={v}>
                    <path d={`M65 ${py(v)}H610`} stroke="#e6e6e6" />
                    <path d={`M45 ${py(v)}h6`} stroke="#828282" />
                    <text x="41" y={py(v) + 4} textAnchor="end" fontSize="12" fill="#333">{v}</text>
                </g>
            ))}
            <path d="M50.500 13V596M65 610.500H610" stroke="#828282" />
            <path d="M55 24h5v4h-5zM55 580h5v4h-5zM77 601h4v5h-4zM594 601h4v5h-4z" fill="#fff" />
            <polyline points={line(pole)} fill="none" stroke="#00f" strokeWidth="2" />
            <polyline points={line(rail)} fill="none" stroke="#008000" strokeWidth="2" />
            <polyline points={line(theory)} fill="none" stroke="#f00" strokeWidth="2" />
            <text transform="translate(14 304) rotate(-90)" textAnchor="middle" fontSize="12">Potenziale [V]</text>
            <text x="338" y="654" textAnchor="middle" fontSize="12">X [m]</text>
        </ChartPlot>
        <Legend>
            <LegendItem $color="#00f">Empirica, Palo</LegendItem>
            <LegendItem $color="#008000">Empirica, rotaia</LegendItem>
            <LegendItem $color="#f00">Teorica, Paolo</LegendItem>
        </Legend>
    </ChartPanel>
);

const Main = () => {
    return (
        <App>
            <GlobalStyle />
            <TitleBar>
                <TitleIcons>
                    <svg width="12" height="13" viewBox="0 0 12 13">
                        <path d="M0 0h10v9H0z" fill="#f00000" />
                        <path d="M0 2h7v2H0z" fill="#fff" />
                        <path d="M8 9l3 4M0 12.500h11M0 10.500h9" stroke="#f00000" strokeWidth="1.500" />
                    </svg>
                    <TitleRule />
                    <svg width="14" height="13" viewBox="0 0 14 13">
                        <circle cx="7" cy="6" r="6.300" fill="#666" />
                        <path d="M4 3l6 6M10 3l-6 6" stroke="#fff" strokeWidth="2" />
                    </svg>
                    <TitleRule />
                </TitleIcons>
                <Title>Trainsrunner IDE [2.0.0.0] 32bit</Title>
                <WindowButton aria-label="Riduci"><svg width="10" height="10"><path d="M0 5.500h10" stroke="#000" /></svg></WindowButton>
                <WindowButton aria-label="Ripristina"><svg width="10" height="10" viewBox="0 0 10 10"><path d="M0.500 2.500h7v7h-7zM2.500 2.500v-2h7v7h-2" fill="none" stroke="#000" /></svg></WindowButton>
                <WindowButton $close aria-label="Chiudi"><svg width="10" height="10" viewBox="0 0 10 10"><path d="M0 0l10 10M10 0L0 10" stroke="#fff" strokeWidth="1.200" /></svg></WindowButton>
            </TitleBar>
            <RibbonTabs>
                <FileButton aria-label="File"><svg width="6" height="6" viewBox="0 0 6 6"><path d="M0 0.500h6L3 6z" fill="#fff" /></svg></FileButton>
                <RibbonTab $width="75px">Progetto</RibbonTab>
                <RibbonTab $width="80px">Strumenti</RibbonTab>
                <RibbonTab $active $width="128px">Analisi e Taratura CC</RibbonTab>
                <Spacer />
                <Info>
                    <svg width="14" height="14" viewBox="0 0 14 14">
                        <circle cx="7" cy="7" r="6.800" fill="#2c74c4" />
                        <path d="M7 6v5M7 2.800v1.800" stroke="#fff" strokeWidth="1.800" />
                    </svg>
                </Info>
            </RibbonTabs>
            <Ribbon>
                {ribbon.map(group => (
                    <RibbonGroup key={group.caption} $width={group.width} $pad={group.pad}>
                        <RibbonRow>
                            {group.items.map(item => (
                                <RibbonButton key={item.label[0]} $width={item.width} disabled={item.disabled}>
                                    {item.icon}
                                    {item.label.map(text => <span key={text}>{text}</span>)}
                                </RibbonButton>
                            ))}
                        </RibbonRow>
                        <RibbonCaption $pad={group.pad}>{group.caption}</RibbonCaption>
                    </RibbonGroup>
                ))}
            </Ribbon>

            <Workspace>
                <LeftDock>
                    <Panel>
                        <PanelHeader><h2>Corto Circuiti DC</h2><Tools /></PanelHeader>
                        <PanelBody>
                            <TreeArea>
                                <Node level={0}>Progetto -&gt; CasoA_TaraturaAsservimento</Node>
                                <TreeRow $level={1}>
                                    <ArrowSlot><OpenArrow /></ArrowSlot>
                                    <Highlight>
                                        <NodeBox $green>
                                            <RoundButton aria-label="Espandi"><Chevron dir="down" /></RoundButton>
                                            Area di taratura -&gt; CasoA_TaraturaAsservimento
                                        </NodeBox>
                                    </Highlight>
                                </TreeRow>
                                <Group title="[SSE1].[ER1]" conditions={firstConditions} />
                                <Node level={3}>Elemento:&nbsp; ER1</Node>
                                <Node level={4} open={false}><NumberField label="Massima corrente" value="5000" /></Node>
                                <Node level={4} open={false}><NumberField label="Minima tensione" value="2000" /></Node>
                                <Group wide title="[SSE1].[A]; [SSE2].[B]; [D].[D]" conditions={secondConditions} />
                                <Node level={3}>Elemento:&nbsp; A</Node>
                            </TreeArea>
                            <ScrollBar thumb={424} after={476} />
                        </PanelBody>
                        <ScrollBar horizontal thumb={340} after={36} />
                    </Panel>
                </LeftDock>

                <CenterDock>
                    <Tabs $height="21px">
                        <Tab $active>Strumento CC</Tab>
                    </Tabs>
                    <Frame>
                        <FrameInner $column>
                            <Tabs>
                                <Tab $width="139px">Risultati simulazione RIP</Tab>
                                <Tab $width="110px">Taratura protezioni</Tab>
                                <Tab $width="81px" $active>Uc-Up pali TE</Tab>
                                <Tab $width="89px">Uc linea e nodi</Tab>
                                <Tab $width="118px">Rapporto di taratura</Tab>
                            </Tabs>
                            <Frame>
                                <FrameInner>
                                    <GridPanel>
                                        <GridPanelHeader><h2>Tensioni oltre soglia</h2><Tools /></GridPanelHeader>
                                        <PanelBody>
                                            <GridArea><Poles /></GridArea>
                                            <ScrollBar thumb={51} after={590} />
                                        </PanelBody>
                                    </GridPanel>
                                    <Chart />
                                </FrameInner>
                            </Frame>
                        </FrameInner>
                    </Frame>
                    <LogPanel>
                        <PanelHeader $tall>
                            <h2>Log di sistema</h2>
                            <LogButton aria-label="Esporta in Excel"><ExcelIcon size={17} /></LogButton>
                            <LogButton aria-label="Cancella"><RedCross /></LogButton>
                            <Tools />
                        </PanelHeader>
                        <LogBody>
                            <LogMain>
                                <LogRows>
                                    <LogTable>
                                        <Columns widths={[18, 75, 64, 1060, ""]} />
                                        <thead>
                                            <tr><th /><th>Timestamp</th><th>Tipo</th><th>Messaggio</th><th /></tr>
                                        </thead>
                                        <tbody>
                                            {logs.map(([time, pos]) => (
                                                <tr key={time}>
                                                    <td><NoEntry /></td>
                                                    <td>{time}</td>
                                                    <td>Errore</td>
                                                    <td>Il palo '{pos} [m] - Palo su 'PLTE1' alla PK '{pos}'' presenta anomalie di tensione di contatto. Consultare il report di dettaglio</td>
                                                    <td />
                                                </tr>
                                            ))}
                                        </tbody>
                                    </LogTable>
                                </LogRows>
                                <ScrollBar horizontal flat thumb={0} />
                            </LogMain>
                            <ScrollBar flat before={50} thumb={8} after={1} />
                        </LogBody>
                    </LogPanel>
                    <Tabs $below $center $height="24px">
                        <Tab $below $active>Log di sistema</Tab>
                        <Tab $below>Log di compilazione</Tab>
                    </Tabs>
                </CenterDock>

                <RightDock>
                    <Panel $flex="485 0 0">
                        <PanelHeader><h2>Esplora progetto</h2><Tools /></PanelHeader>
                        <SearchRow>
                            <SearchInput placeholder="Cerca nel progetto" aria-label="Cerca nel progetto" />
                            <ClearButton type="button" aria-label="Annulla ricerca"><RedCross opacity={0.6} /></ClearButton>
                        </SearchRow>
                        <ProjectTree>
                            {project.map(item => (
                                <ProjectRow key={item.label} $pad={item.pad} $bold={item.bold}>
                                    {item.icon && <ProjectArrow>{item.open && <OpenArrow />}</ProjectArrow>}
                                    {item.icon && smallIcons[item.icon]}
                                    {item.label}
                                </ProjectRow>
                            ))}
                        </ProjectTree>
                        <ScrollBar horizontal flat thumb={76} after={50} />
                    </Panel>
                    <LowerDock>
                        <Panel>
                            <PanelHeader><h2>Configurazioni rete</h2><Tools /></PanelHeader>
                            <PanelBody>
                                <GridArea>
                                    <ConfigTable>
                                        <thead><tr><HeadCell>Configurazione</HeadCell></tr></thead>
                                        <tbody>
                                            {configurations.map(name => <tr key={name}><td>{name}</td></tr>)}
                                        </tbody>
                                    </ConfigTable>
                                </GridArea>
                                <ScrollBar thumb={300} after={85} />
                            </PanelBody>
                            <ScrollBar horizontal before={12} thumb={62} after={50} />
                        </Panel>
                        <Tabs $below $height="24px">
                            <Tab $below>Are</Tab>
                            <Tab $below>Riman</Tab>
                            <Tab $below $active $grow>Configurazioni</Tab>
                        </Tabs>
                    </LowerDock>
                </RightDock>
            </Workspace>
        </App>
    );
}

export default Main;
